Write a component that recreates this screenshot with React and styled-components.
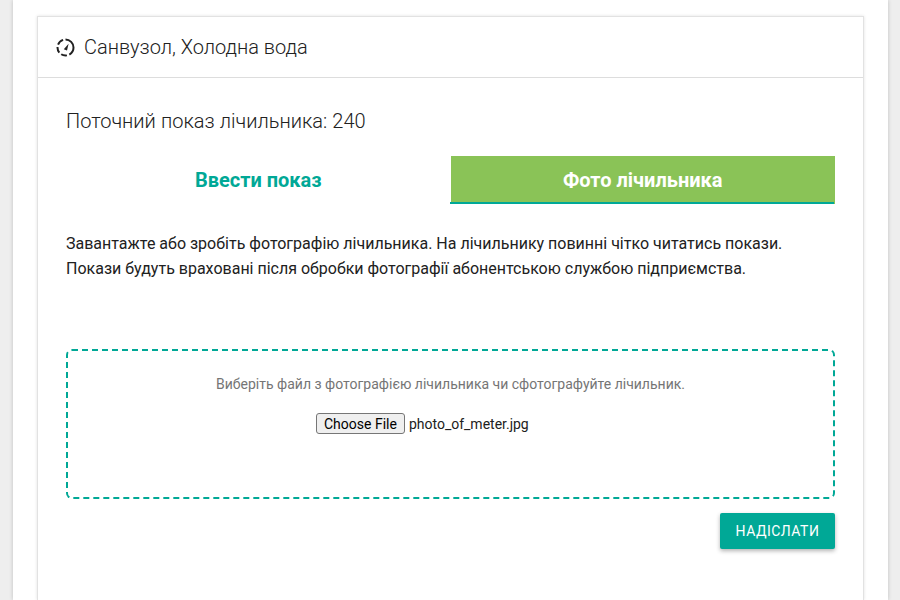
import React from 'react';
import styled, { createGlobalStyle } from 'styled-components';

const GlobalStyle = createGlobalStyle`
  * { box-sizing: border-box; }
  html, body {
    margin: 0;
    padding: 0;
    height: 100%;
    overflow: hidden;
    background: #eeeeee;
    font-family: Roboto, sans-serif;
  }
`;

const Page = styled.div`
  height: 600px;
  margin: 0 12px 0 13px;
  padding: 16px 24px 0 24px;
  display: flex;
  background: #fff;
  box-shadow: 0 0 4px rgba(0, 0, 0, 0.2);
`;

const Card = styled.div`
  flex: 1;
  background: #fff;
  border: 1px solid #e2e2e2;
  border-bottom: none;
  box-shadow: 0 0 3px rgba(0, 0, 0, 0.12);
`;

const CardHeader = styled.div`
  height: 61px;
  display: flex;
  align-items: center;
  gap: 9px;
  padding: 0 18px;
  border-bottom: 1px solid #dddddd;
  font-size: 20px;
  font-weight: 300;
  color: #212121;
`;

const CardBody = styled.div`
  padding: 30px 28px 0 28px;
`;

const Reading = styled.div`
  font-size: 20px;
  font-weight: 300;
  line-height: 26px;
  word-spacing: 0.25px;
  color: #212121;
`;

const Tabs = styled.div`
  display: flex;
  margin-top: 22px;
`;

const Tab = styled.div`
  position: relative;
  flex: 1;
  height: 48px;
  display: flex;
  align-items: center;
  justify-content: center;
  font-size: 20px;
  font-weight: 700;
  color: ${(p) => (p.$active ? '#fff' : '#00a896')};
  background: ${(p) => (p.$active ? '#8ac357' : 'transparent')};

  ${(p) => p.$active && `
    &::after {
      content: '';
      position: absolute;
      left: -1px;
      right: 1px;
      bottom: 0;
      height: 2px;
      background: #00a896;
    }
  `}
`;

const Info = styled.p`
  margin: 27px 0 0 0;
  font-size: 16px;
  line-height: 25px;
  color: #212121;
`;

const DropZone = styled.div`
  margin-top: 68px;
  height: 150px;
  border: 2px dashed #00a896;
  border-radius: 6px;
  padding-top: 24px;
  display: flex;
  flex-direction: column;
  align-items: center;
`;

const Hint = styled.div`
  font-size: 14px;
  line-height: 18px;
  color: #757575;
`;

const FileRow = styled.div`
  width: 269px;
  margin-top: 20px;
  display: flex;
  align-items: center;
  gap: 4px;
  font-size: 14px;
  color: #212121;
`;

const FileButton = styled.button`
  height: 21px;
  padding: 0 7px;
  font-family: Roboto, sans-serif;
  font-size: 14px;
  color: #000;
  background: #efefef;
  border: 1px solid #767676;
  border-radius: 3px;
`;

const Actions = styled.div`
  display: flex;
  justify-content: flex-end;
  margin-top: 14px;
`;

const SendButton = styled.button`
  height: 36px;
  width: 115px;
  border: none;
  border-radius: 2px;
  background: #00a896;
  color: #fff;
  font-family: Roboto, sans-serif;
  font-size: 14px;
  font-weight: 400;
  letter-spacing: 0.5px;
  box-shadow: 0 2px 4px rgba(0, 0, 0, 0.3);
`;

function GaugeIcon() {
  return (
    <svg width="19" height="19" viewBox="0 0 19 19" fill="none">
      <circle
        cx="9.5"
        cy="9.5"
        r="8"
        stroke="#212121"
        strokeWidth="2"
        strokeDasharray="21 2.5 6 2.5 6 2.5 7 2.8"
        transform="rotate(-90 9.5 9.5)"
      />
      <path d="M7.8 11.2l4.8-5.4-1.6 6.6z" fill="#212121" />
    </svg>
  );
}

export default function App() {
  return (
    <>
      <GlobalStyle />
      <Page>
        <Card>
          <CardHeader>
            <GaugeIcon />
            Санвузол, Холодна вода
          </CardHeader>
          <CardBody>
            <Reading>Поточний показ лічильника: 240</Reading>
            <Tabs>
              <Tab>Ввести показ</Tab>
              <Tab $active>Фото лічильника</Tab>
            </Tabs>
            <Info>
              Завантажте або зробіть фотографію лічильника. На лічильнику повинні чітко читатись покази.
              <br />
              Покази будуть враховані після обробки фотографії абонентською службою підприємства.
            </Info>
            <DropZone>
              <Hint>Виберіть файл з фотографією лічильника чи сфотографуйте лічильник.</Hint>
              <FileRow>
                <FileButton>Choose File</FileButton>
                photo_of_meter.jpg
              </FileRow>
            </DropZone>
            <Actions>
              <SendButton>НАДІСЛАТИ</SendButton>
            </Actions>
          </CardBody>
        </Card>
      </Page>
    </>
  );
}
